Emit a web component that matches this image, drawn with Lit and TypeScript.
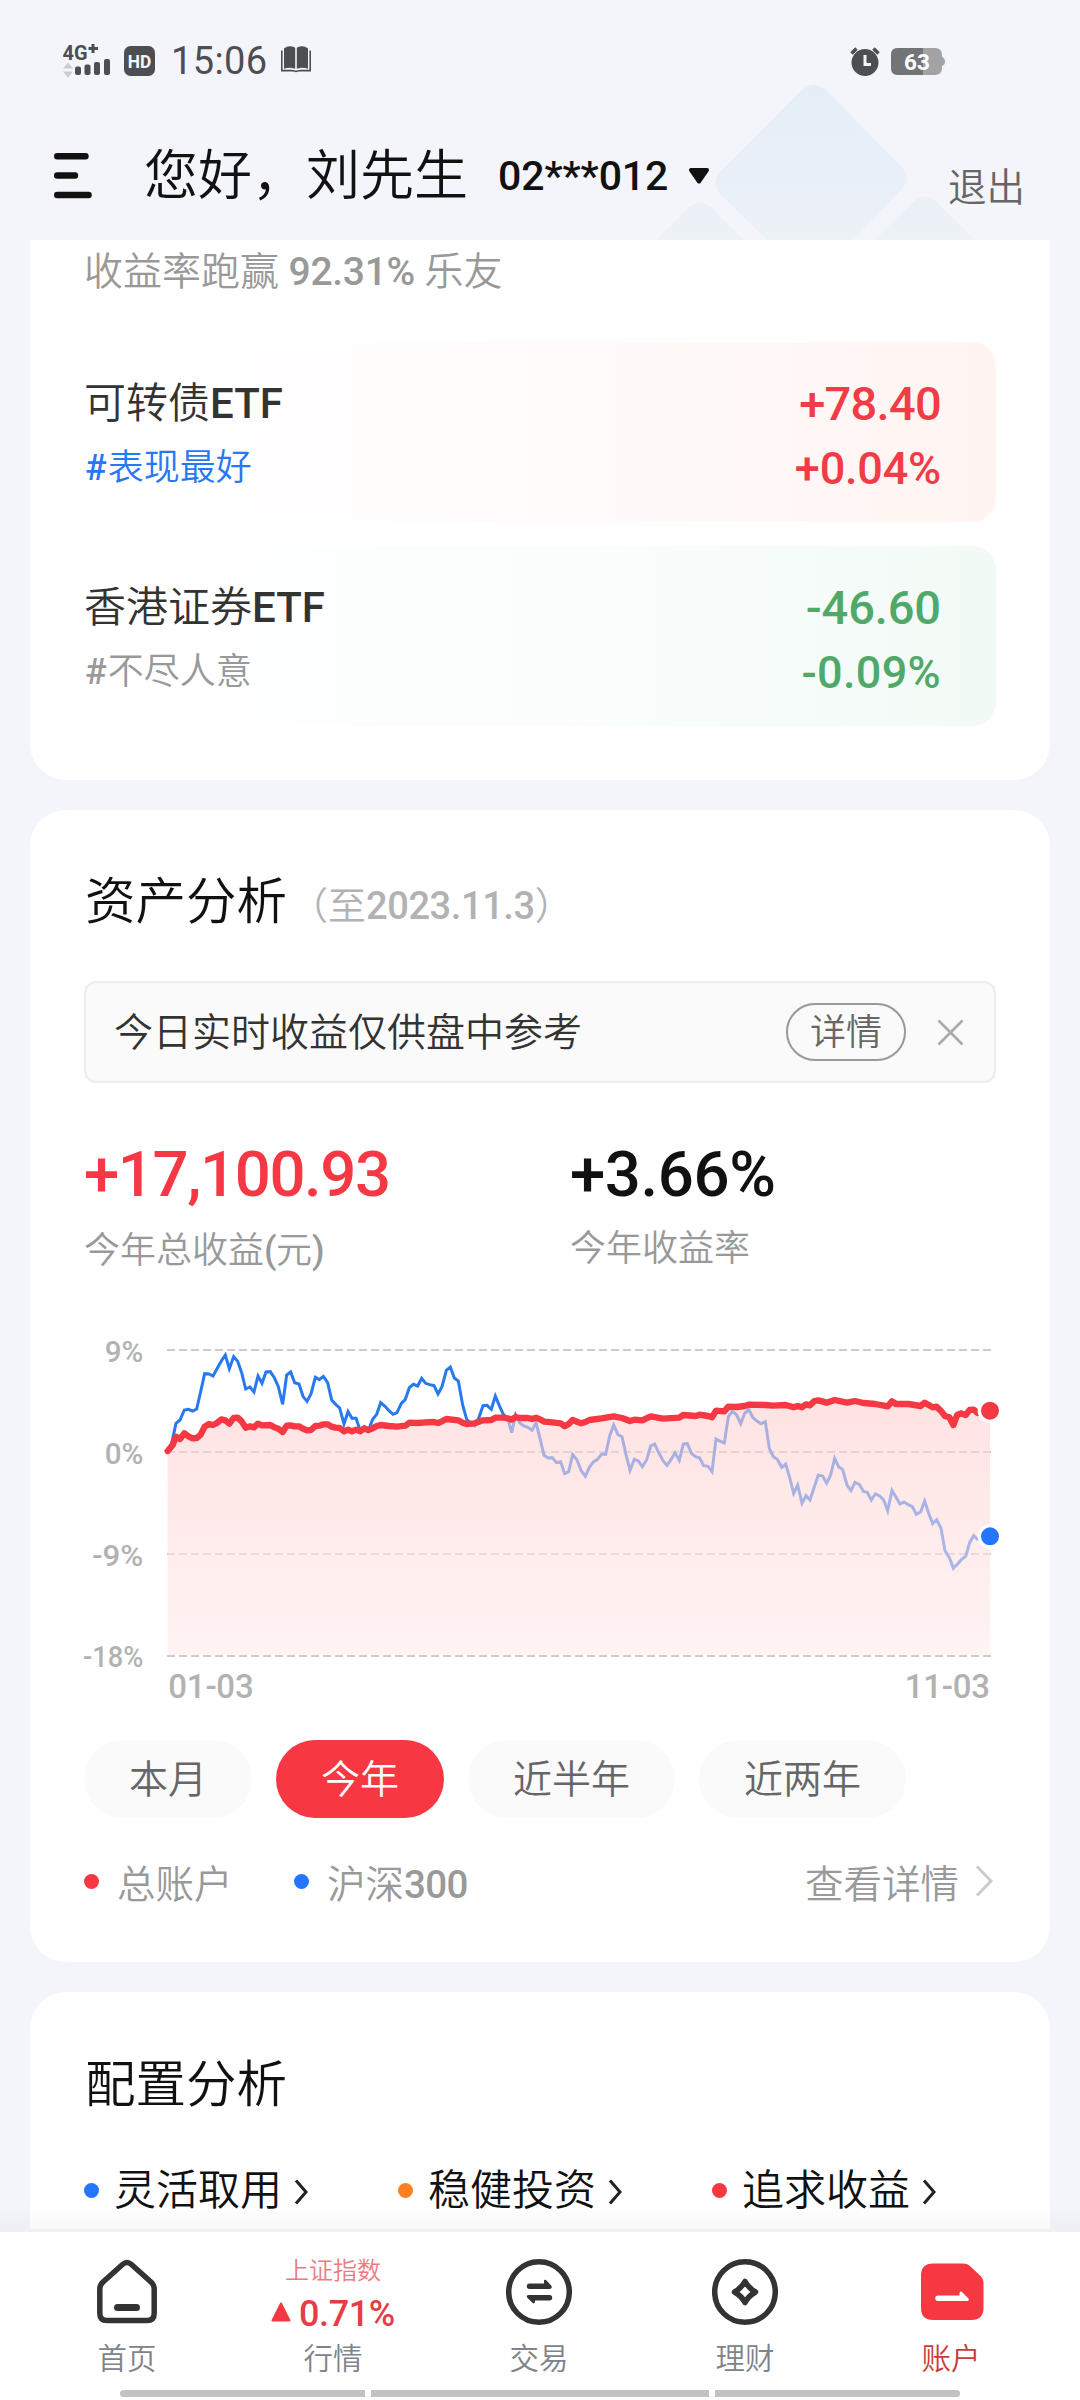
import { LitElement, html, css, svg } from "lit";
import { customElement, property } from "lit/decorators.js";

const fontStack = css`Roboto, "Noto Sans CJK SC", sans-serif`;

/* Chart coordinates use a 2940 x 1230 plane; each pair is "x,y". */
const benchmark =
  "323,420 335,400 348,340 360,330 373,300 385,298 398,303 410,297 422,245 434,191 447,192 459,198 471,176 484,153 496,135 508,176 521,140 533,154 545,188 557,237 570,231 582,246 594,198 606,220 618,186 631,185 643,203 655,230 668,283 680,195 692,186 704,218 717,222 729,259 741,274 753,252 766,202 778,209 790,199 803,218 815,270 827,283 839,294 852,342 864,305 876,325 888,325 901,362 913,350 925,362 938,328 950,313 962,278 975,289 987,302 999,313 1011,308 1024,280 1036,268 1048,233 1060,223 1073,228 1085,205 1097,220 1109,224 1122,227 1134,252 1146,230 1159,181 1171,171 1183,204 1195,213 1208,285 1220,328 1232,340 1244,348 1257,322 1269,287 1281,286 1294,298 1306,258 1318,287 1330,313 1343,325 1355,368 1367,315 1379,338 1391,348 1404,352 1416,361 1428,338 1440,385 1452,436 1465,444 1477,443 1489,458 1502,455 1514,491 1526,485 1538,434 1551,450 1563,481 1576,499 1588,472 1600,456 1612,449 1625,432 1637,433 1649,378 1661,345 1674,374 1686,380 1698,434 1710,481 1723,448 1735,453 1747,470 1760,449 1772,408 1784,402 1797,430 1809,452 1821,466 1833,449 1845,428 1858,451 1870,402 1882,401 1895,431 1907,440 1919,444 1931,467 1944,469 1956,485 1968,387 1981,394 1993,399 2005,320 2017,304 2030,315 2042,341 2054,310 2066,298 2079,323 2091,333 2103,341 2116,335 2128,416 2140,440 2152,448 2165,472 2177,462 2189,503 2201,550 2213,525 2226,580 2238,557 2250,570 2263,530 2275,495 2288,498 2300,520 2312,495 2324,445 2336,470 2348,479 2361,525 2373,542 2385,517 2398,523 2410,544 2422,547 2434,570 2446,552 2459,558 2471,570 2483,602 2496,541 2508,562 2520,582 2532,576 2545,584 2557,590 2569,613 2582,605 2594,573 2606,610 2618,641 2630,629 2643,655 2655,722 2668,743 2680,775 2692,763 2704,749 2717,739 2729,698 2741,677 2753,688 2790,679";
const account =
  "323,423 338,405 348,380 360,387 373,370 385,379 398,385 410,384 422,374 434,350 447,342 459,345 471,339 484,328 496,331 508,341 521,324 533,323 545,334 557,353 570,349 582,352 594,341 606,346 631,345 643,352 655,356 668,366 680,347 692,346 704,349 717,349 729,356 741,361 753,360 766,348 778,347 790,343 803,343 815,350 827,353 839,354 852,364 864,359 876,364 888,359 901,364 913,355 925,360 938,355 950,348 962,345 987,348 1011,350 1036,347 1048,338 1073,339 1097,337 1122,336 1134,339 1146,334 1159,327 1195,331 1208,338 1220,342 1244,340 1269,331 1294,330 1306,323 1330,323 1343,325 1355,329 1367,321 1379,324 1404,324 1416,327 1428,323 1440,328 1453,335 1477,337 1502,340 1514,349 1526,342 1538,330 1563,340 1576,336 1588,330 1625,325 1661,319 1686,324 1710,333 1723,329 1747,331 1772,319 1809,326 1858,323 1870,315 1907,318 1919,314 1944,318 1956,322 1968,302 1993,304 2005,290 2030,291 2054,288 2066,284 2115,285 2140,287 2177,285 2201,292 2213,288 2226,292 2238,283 2250,286 2263,273 2275,271 2300,278 2324,270 2361,278 2385,273 2410,279 2446,282 2483,289 2496,274 2508,282 2545,282 2582,288 2594,278 2618,292 2630,290 2643,303 2655,318 2668,322 2680,345 2692,314 2704,310 2717,315 2729,300 2741,299 2753,309 2790,302";

@customElement("status-bar")
class StatusBar extends LitElement {
  static styles = css`
    :host { display: flex; height: 120px; box-sizing: border-box; padding: 42px 134px 0 63px; color: #4c4e51; font-family: ${fontStack}; align-items: flex-start; }
    svg { display: block; flex: none; }
    .net { width: 49px; height: 36px; }
    .hd { margin: 4px 0 0 12px; }
    .time { font-size: 38px; line-height: 38px; font-weight: 400; letter-spacing: 0.4px; margin: 0 0 0 16px; width: 99px; white-space: nowrap; }
    .book { margin: 4px 0 0 11px; }
    .spacer { flex: 1; }
    .alarm { margin: 5px 11px 0 0; }
    .battery { margin-top: 6px; }
    text { font-family: ${fontStack}; font-weight: 700; }
  `;
  render() {
    return html`
      <svg class="net" viewBox="0 0 49 36">
        <text x="-0.5" y="17.5" font-size="21" fill="#4c4e51" textLength="25" lengthAdjust="spacingAndGlyphs">4G</text>
        <path d="M30 2v9M25.5 6.5h9.500" stroke="#4c4e51" stroke-width="3" fill="none" />
        <path d="M0 26.500l5-6 5 6zM0 29.500l5 6 5-6z" fill="#cbccd0" />
        <g fill="#4c4e51">
          <rect x="12" y="24.500" width="6" height="8.500" rx="2" /><rect x="21.500" y="22.500" width="6" height="10.500" rx="2" />
          <rect x="31" y="20" width="6" height="13" rx="2" /><rect x="41" y="17" width="6" height="16" rx="2" />
        </g>
      </svg>
      <svg class="hd" width="31" height="30" viewBox="0 0 31 30">
        <rect width="31" height="30" rx="6.500" fill="#4c4e51" />
        <text x="3.800" y="21.600" font-size="18" fill="#f4f5fa" textLength="23.500" lengthAdjust="spacingAndGlyphs">HD</text>
      </svg>
      <span class="time">15:06</span>
      <svg class="book" width="30" height="27" viewBox="0 0 30 27" fill="#4c4e51">
        <path d="M3 2.500Q8 -1.500 14.200 1.800V22.800Q8.500 20.800 3 22.800zM15.800 1.800Q22 -1.500 27 2.500V22.800Q21.500 20.800 15.800 22.800z" />
        <path d="M.8 4.500V24.600H11.500L15 25.500 18.500 24.600H29.200V4.500" fill="none" stroke="#4c4e51" stroke-width="1.600" />
      </svg>
      <span class="spacer"></span>
      <svg class="alarm" width="30" height="30" viewBox="0 0 30 30">
        <circle cx="15" cy="15.500" r="13.500" fill="#4c4e51" />
        <path d="M1.500 6.500l5-5M28.500 6.500l-5-5" stroke="#4c4e51" stroke-width="3.500" />
        <path d="M15 8v9.500h6" fill="none" stroke="#f4f5fa" stroke-width="3" />
      </svg>
      <svg class="battery" width="55" height="27" viewBox="0 0 55 27">
        <path d="M7 0H44Q51 0 51 7V9Q54 10 54 13.500T51 18V20Q51 27 44 27H7Q0 27 0 20V7Q0 0 7 0z" fill="#a2a3a7" />
        <path d="M7 0H32V27H7Q0 27 0 20V7Q0 0 7 0z" fill="#737476" />
        <text x="13" y="21.800" font-size="22.500" fill="#fff" textLength="26">63</text>
      </svg>
    `;
  }
}

@customElement("page-header")
class PageHeader extends LitElement {
  static styles = css`
    :host { display: flex; height: 120px; box-sizing: border-box; padding: 0 55px 0 54px; align-items: flex-start; color: #111; font-family: ${fontStack}; }
    svg { display: block; flex: none; }
    .menu { margin-top: 33px; }
    .greeting { font-size: 54px; line-height: 60px; font-weight: 350; margin: 27px 0 0 52px; width: 324px; white-space: nowrap; }
    .id { font-size: 41px; line-height: 50px; font-weight: 500; margin: 31px 0 0 30px; width: 169px; white-space: nowrap; letter-spacing: -0.1px; }
    .arrow { margin: 48px 0 0 21px; }
    .exit { margin: 43px 0 0 auto; font-size: 38.5px; line-height: 50px; font-weight: 350; color: #666; }
  `;
  render() {
    return html`
      <svg class="menu" width="38" height="46" viewBox="0 0 38 46" stroke="#111" stroke-width="6.400" stroke-linecap="round">
        <path d="M3.200 3.200H31.500M3.200 22.500H21M3.200 42H34.600" />
      </svg>
      <span class="greeting">您好，刘先生</span>
      <span class="id">02***012</span>
      <svg class="arrow" width="22" height="17" viewBox="0 0 22 17"><path d="M3 2H19L11 13.500z" fill="#111" stroke="#111" stroke-width="4" stroke-linejoin="round" /></svg>
      <span class="exit">退出</span>
    `;
  }
}

@customElement("rank-row")
class RankRow extends LitElement {
  @property() name = "";
  @property() tag = "";
  @property() amount = "";
  @property() rate = "";
  static styles = css`
    :host { display: flex; justify-content: space-between; height: 180px; box-sizing: border-box; padding: 30px 55px 0 0; border-radius: 24px; font-family: ${fontStack}; font-weight: 350; background: linear-gradient(90deg, #fff 4%, #fffbfa 55%, #fff4f2); }
    :host(.down) { background: linear-gradient(90deg, #fff 4%, #f9fdfb 60%, #f2faf6); }
    .left, .right { display: flex; flex-direction: column; }
    .right { align-items: flex-end; color: #f03c46; font-weight: 500; }
    span { line-height: 64px; white-space: nowrap; }
    .name { font-size: 42px; color: #333; }
    .tag { font-size: 36px; color: #2878f5; padding-left: 1px; }
    b { font-weight: 500; }
    .tag b { letter-spacing: 1px; }
    .amount { font-size: 47px; letter-spacing: -0.7px; }
    .rate { font-size: 45px; letter-spacing: -0.2px; line-height: 66px; }
    :host(.down) .tag { color: #999; }
    :host(.down) .amount { letter-spacing: -0.1px; }
    :host(.down) .rate { letter-spacing: 0.3px; }
    :host(.down) .right { color: #50a869; }
  `;
  render() {
    return html`
      <div class="left"><span class="name">${this.name}<b>ETF</b></span><span class="tag"><b>#</b>${this.tag}</span></div>
      <div class="right"><span class="amount">${this.amount}</span><span class="rate">${this.rate}</span></div>
    `;
  }
}

@customElement("profit-chart")
class ProfitChart extends LitElement {
  static styles = css`
    :host { display: block; height: 410px; width: 980px; }
    svg { display: block; }
    text { font-family: ${fontStack}; fill: #b2b2b2; font-weight: 500; }
    .axis { font-size: 87px; text-anchor: end; }
    .date { font-size: 99px; }
    .end { text-anchor: end; }
  `;
  render() {
    const ticks: [string, number, number][] = [["9%", 120, 116], ["0%", 426, 116], ["-9%", 732, 154], ["-18%", 1038, 181]];
    return html`
      <svg width="980" height="410" viewBox="0 0 2940 1230">
        <defs><linearGradient id="area" x1="0" y1="0" x2="0" y2="1">
          <stop offset="0" stop-color="#ffd0d0" stop-opacity=".6" /><stop offset="1" stop-color="#ffebeb" stop-opacity=".6" />
        </linearGradient></defs>
        ${ticks.map(([label, y, width], i) => svg`
          <text class="axis" x="250" y=${y + (i === 3 ? 32 : 35)} textLength=${width} lengthAdjust="spacingAndGlyphs">${label}</text>
          <path d="M321 ${y}H2793" stroke="#ccc" stroke-width="6" stroke-dasharray="24 12" />`)}
        <polyline points=${benchmark} fill="none" stroke="#2878f0" stroke-width="9" />
        <polygon points=${"323,1035 " + account + " 2790,1035"} fill="url(#area)" />
        <polyline points=${account} fill="none" stroke="#f53843" stroke-width="19" stroke-linejoin="round" stroke-linecap="round" />
        <circle cx="2790" cy="302" r="32" fill="#f53843" stroke="#fff" stroke-width="10" />
        <circle cx="2790" cy="679" r="32" fill="#2476ff" stroke="#fff" stroke-width="10" />
        <text class="date" x="325" y="1163" textLength="256">01-03</text>
        <text class="date end" x="2790" y="1163" textLength="256">11-03</text>
      </svg>
    `;
  }
}

@customElement("tab-bar")
class TabBar extends LitElement {
  static styles = css`
    :host { display: flex; flex-direction: column; height: 171px; box-sizing: border-box; border-top: 3px solid #f0f0f1; background: #fff; font-family: ${fontStack}; font-weight: 350; }
    .tabs { display: grid; grid-template-columns: repeat(5, 206px); padding-left: 24px; height: 158px; }
    .tab { display: flex; flex-direction: column; align-items: center; color: #80838c; font-size: 29.500px; }
    .icon { height: 106px; display: flex; flex-direction: column; align-items: center; padding-top: 24px; box-sizing: border-box; }
    .label { line-height: 42px; }
    .active { color: #c83c3c; }
    .active svg { margin-left: 1px; }
    .index { font-size: 24px; line-height: 30px; color: #ee7a80; }
    .pct { display: flex; align-items: center; gap: 8px; color: #e63c46; font-weight: 500; font-size: 36px; line-height: 40px; margin-top: 8px; letter-spacing: -0.4px; }
    .pct svg { margin-top: -4px; }
    svg { display: block; }
    .bar { display: flex; gap: 6px; padding: 0 120px; height: 7px; }
    .bar i { background: #c2c2c2; flex: 245 0 0; border-radius: 4px 0 0 4px; }
    .bar i:nth-child(2) { flex-grow: 338; border-radius: 0; }
    .bar i:nth-child(3) { border-radius: 0 4px 4px 0; }
  `;
  render() {
    return html`
      <div class="tabs">
        <div class="tab"><div class="icon">
          <svg width="66" height="72" viewBox="0 0 66 72" fill="none" stroke="#333" stroke-width="5.500">
            <path d="M28.500 8.500Q33 4.500 37.500 8.500L57 26Q60.200 29 60.200 33V57.500Q60.200 64.500 53 64.500H13Q5.800 64.500 5.800 57.500V33Q5.800 29 9 26z" />
            <path d="M23.500 51.500H42.500" stroke-width="7" stroke-linecap="round" />
          </svg></div><span class="label">首页</span></div>
        <div class="tab"><div class="icon">
          <span class="index">上证指数</span>
          <span class="pct"><svg width="20" height="20" viewBox="0 0 20 20"><path d="M10 1.500L18.500 18.500H1.500z" fill="#f53843" stroke="#f53843" stroke-width="2" stroke-linejoin="round" /></svg>0.71%</span>
          </div><span class="label">行情</span></div>
        <div class="tab"><div class="icon">
          <svg width="66" height="72" viewBox="0 0 66 72">
            <ellipse cx="33" cy="36" rx="30.300" ry="30.300" fill="none" stroke="#333" stroke-width="5.500" />
            <path d="M23.500 27.500H38V24.500Q39 23 41 25L45.500 30Q46.500 32.500 44 32.900H23.500A2.700 2.700 0 0 1 23.500 27.500zM43.500 39H23Q19.500 39 21.500 42L27 47.300Q29 48 29 45V44.400H43.500A2.700 2.700 0 0 0 43.500 39z" fill="#333" />
          </svg></div><span class="label">交易</span></div>
        <div class="tab"><div class="icon">
          <svg width="66" height="72" viewBox="0 0 66 72" fill="none" stroke="#333">
            <circle cx="33" cy="36" r="30.300" stroke-width="5.500" />
            <path d="M33 25.500Q36.500 32 43.500 36Q36.500 40 33 46.500Q29.500 40 22.500 36Q29.500 32 33 25.500z" stroke-width="5.500" stroke-linejoin="round" />
          </svg></div><span class="label">理财</span></div>
        <div class="tab active"><div class="icon">
          <svg width="66" height="72" viewBox="0 0 66 72">
            <path d="M14 7.500H44Q48.500 7.500 51.500 10.500L61 19.500Q64.500 22.500 64.500 27V52Q64.500 64 52.500 64H14Q2 64 2 52V19.500Q2 7.500 14 7.500z" fill="#f73843" />
            <path d="M19 39.500H40.500V37Q41.500 34.500 43.500 36.500L49.500 42.500Q50.500 44.800 48.500 45H19A2.750 2.750 0 0 1 19 39.500z" fill="#fff" />
          </svg></div><span class="label">账户</span></div>
      </div>
      <div class="bar"><i></i><i></i><i></i></div>
    `;
  }
}

@customElement("app-root")
class AppRoot extends LitElement {
  static styles = css`
    :host { display: flex; flex-direction: column; position: relative; width: 1080px; height: 2400px; overflow: hidden; background: #f4f5fa; font-family: ${fontStack}; font-weight: 350; }
    .deco { position: absolute; left: 600px; top: 60px; z-index: 0; }
    status-bar, page-header { position: relative; }
    b { font-weight: 500; }
    main { display: flex; flex-direction: column; gap: 30px; padding: 0 30px; height: 1989px; overflow: hidden; position: relative; }
    main::after { content: ""; position: absolute; left: 0; right: 0; bottom: 0; height: 24px; background: linear-gradient(rgba(0, 0, 0, 0), rgba(0, 0, 0, 0.025)); }
    .card { background: #fff; border-radius: 36px; padding: 0 54px; box-sizing: border-box; flex: none; }
    .first { border-radius: 0 0 36px 36px; height: 540px; }
    .assets { height: 1152px; padding-top: 62px; }
    .config { height: 400px; padding-top: 63px; }
    .beat { font-size: 39px; line-height: 64px; height: 102px; color: #999; }
    .beat b { letter-spacing: -0.3px; }
    .ranks { display: flex; flex-direction: column; gap: 24px; }
    h2 { margin: 0; font-size: 50.500px; line-height: 60px; font-weight: 350; color: #111; white-space: nowrap; padding-left: 1px; }
    .title { display: flex; align-items: baseline; }
    .asof { font-size: 38px; color: #b2b2b2; margin-left: 3px; }
    .asof b { letter-spacing: -0.4px; }
    .notice { display: flex; align-items: center; height: 102px; box-sizing: border-box; margin-top: 49px; border: 2px solid #ededed; border-radius: 12px; background: #fafafa; padding: 0 30px 0 28px; font-size: 39px; color: #333; }
    .hint { line-height: 50px; margin-top: 1px; }
    .detail { margin-left: auto; width: 120px; height: 58px; box-sizing: border-box; border: 2px solid #999; border-radius: 29px; font-size: 36px; line-height: 57px; text-align: center; color: #666; }
    .close { margin-left: 31px; }
    .stats { display: grid; grid-template-columns: 486px 1fr; margin-top: 57px; }
    .stat { display: flex; flex-direction: column; }
    .num { font-size: 63.500px; line-height: 70px; font-weight: 500; color: #111; white-space: nowrap; letter-spacing: -0.4px; }
    .up { color: #f53843; letter-spacing: -1.4px; }
    .cap { font-size: 36px; line-height: 50px; color: #999; margin-top: 14px; }
    .cap b { letter-spacing: -0.6px; }
    .stat:first-child .cap { margin-top: 16px; }
    profit-chart { margin: 34px 0 0 -24px; }
    .ranges { display: flex; gap: 24px; margin-top: 20px; }
    .range { width: 168px; height: 78px; border-radius: 39px; background: #fafafa; color: #666; font-size: 39px; line-height: 81px; text-align: center; }
    .wide { width: 207px; }
    .on { background: #f73843; color: #fff; }
    .legend { display: flex; align-items: center; height: 50px; margin-top: 38px; font-size: 38.500px; color: #999; white-space: nowrap; }
    .legend b { letter-spacing: -0.6px; }
    .dot { width: 15px; height: 15px; border-radius: 50%; background: #f73843; flex: none; }
    .blue { background: #2476ff; }
    .orange { background: #ff8021; }
    .legend .dot { margin-right: 18px; }
    .total { width: 177px; }
    .more { margin-left: auto; }
    .chev { margin: 0 3px 0 16px; }
    .groups { display: grid; grid-template-columns: repeat(3, 314px); margin-top: 51px; }
    .group { display: flex; align-items: center; font-size: 42px; line-height: 50px; color: #111; white-space: nowrap; }
    .group .dot { margin-right: 15px; margin-top: -1px; }
    .group svg { margin: 1px 0 0 12px; }
    svg { display: block; flex: none; }
  `;
  render() {
    const group = (tone: string, label: string) => html`
      <div class="group"><i class="dot ${tone}"></i>${label}
        <svg width="15" height="26" viewBox="0 0 15 26" fill="none" stroke="#222" stroke-width="3"><path d="M2 1.500L12 13 2 24.500" /></svg></div>`;
    return html`
      <svg class="deco" width="430" height="180" viewBox="600 60 430 180">
        <defs><linearGradient id="deco" gradientUnits="userSpaceOnUse" x1="0" y1="85" x2="0" y2="240">
          <stop offset="0" stop-color="#e5eef8" /><stop offset=".6" stop-color="#e9eff8" /><stop offset="1" stop-color="#edf2f6" />
        </linearGradient></defs>
        <g fill="url(#deco)">
          <path d="M802 90Q814 80 826 90L901 166Q913 178 901 190L824 270Q811 283 798 270L722 196Q709 183 721 171z" />
          <path d="M688 208Q700 197 712 208L790 286H610z" />
          <path d="M913 202Q925 191 937 202L1021 286H829z" />
        </g>
      </svg>
      <status-bar></status-bar>
      <page-header></page-header>
      <main>
        <section class="card first">
          <div class="beat">收益率跑赢 <b>92.31%</b> 乐友</div>
          <div class="ranks">
            <rank-row name="可转债" tag="表现最好" amount="+78.40" rate="+0.04%"></rank-row>
            <rank-row class="down" name="香港证券" tag="不尽人意" amount="-46.60" rate="-0.09%"></rank-row>
          </div>
        </section>
        <section class="card assets">
          <div class="title"><h2>资产分析</h2><span class="asof">（至<b>2023.11.3</b>）</span></div>
          <div class="notice"><span class="hint">今日实时收益仅供盘中参考</span><span class="detail">详情</span>
            <svg class="close" width="27" height="27" viewBox="0 0 27 27" stroke="#aaa" stroke-width="2.600"><path d="M1.500 1.500L25.500 25.500M25.500 1.500L1.500 25.500" /></svg></div>
          <div class="stats">
            <div class="stat"><span class="num up">+17,100.93</span><span class="cap">今年总收益<b>(</b>元<b>)</b></span></div>
            <div class="stat"><span class="num">+3.66%</span><span class="cap">今年收益率</span></div>
          </div>
          <profit-chart></profit-chart>
          <div class="ranges"><span class="range">本月</span><span class="range on">今年</span><span class="range wide">近半年</span><span class="range wide">近两年</span></div>
          <div class="legend">
            <i class="dot"></i><span class="total">总账户</span><i class="dot blue"></i><span>沪深<b>300</b></span><span class="more">查看详情</span>
            <svg class="chev" width="18" height="32" viewBox="0 0 18 32" fill="none" stroke="#ccc" stroke-width="3"><path d="M2 1.500L16 16 2 30.500" /></svg>
          </div>
        </section>
        <section class="card config">
          <h2>配置分析</h2>
          <div class="groups">${group("blue", "灵活取用")}${group("orange", "稳健投资")}${group("", "追求收益")}</div>
        </section>
      </main>
      <tab-bar></tab-bar>
    `;
  }
}
